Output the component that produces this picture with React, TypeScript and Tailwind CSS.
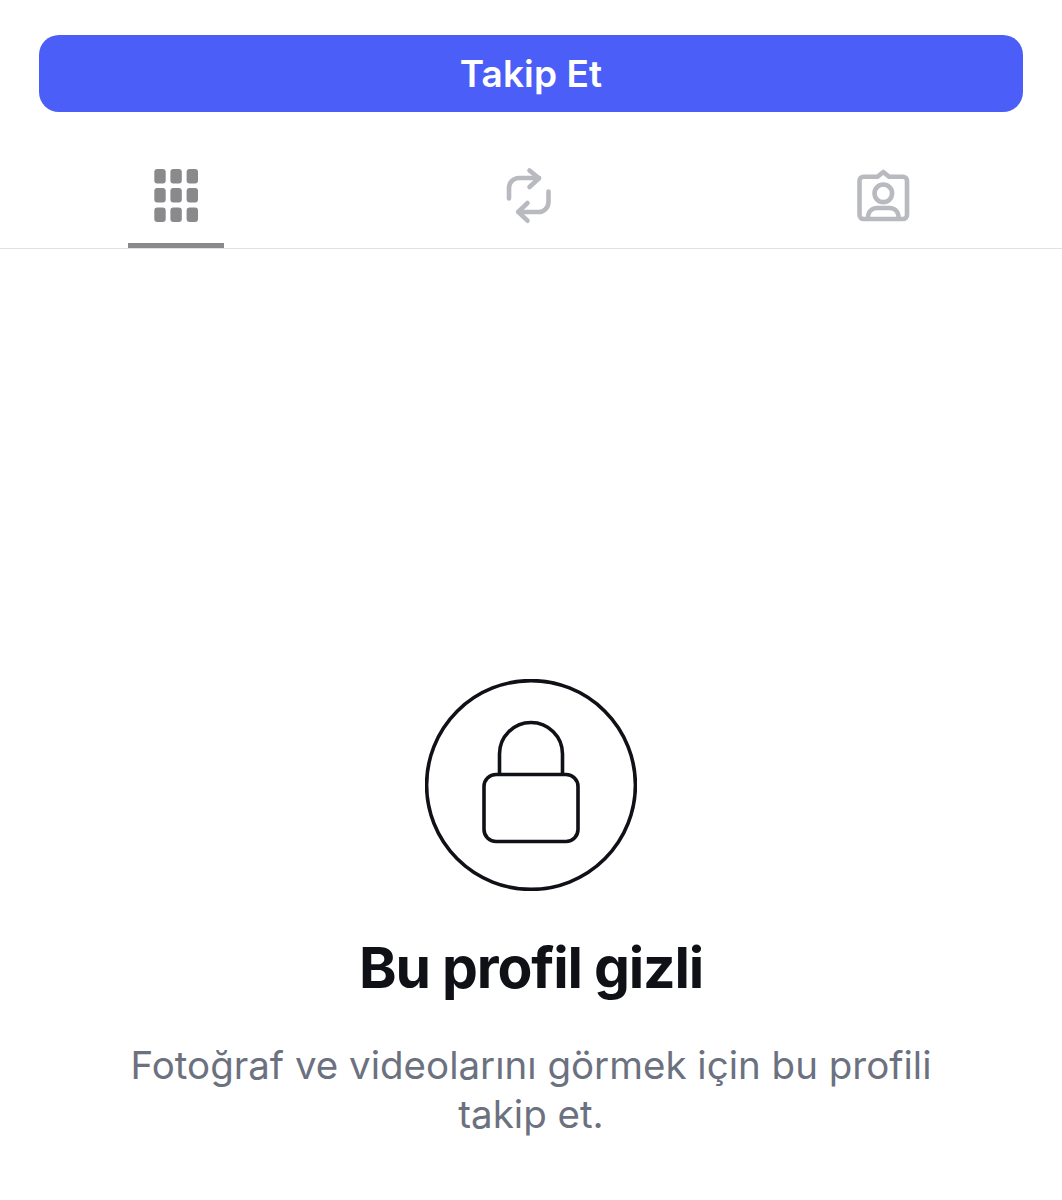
export default function App() {
  return (
    <div className="min-h-[1200px] bg-white pt-[35px] font-['Inter',sans-serif]">
      <div className="px-[39px]">
        <button className="w-full h-[77px] rounded-[20px] bg-[#4b5ff8] text-white text-[37px] font-semibold tracking-[0.1px]">
          Takip Et
        </button>
      </div>

      <div className="relative grid grid-cols-3 h-[137px] border-b border-[#e2e2e4]">
        <div className="flex justify-center pt-[53px]">
          <svg width="60" height="60" viewBox="147 165 60 60" fill="#8a8a8c">
            <rect x="154.3" y="169" width="11.4" height="14.5" rx="3" />
            <rect x="170.4" y="169" width="11.4" height="14.5" rx="3" />
            <rect x="186.6" y="169" width="11.4" height="14.5" rx="3" />
            <rect x="154.3" y="188" width="11.4" height="14.5" rx="3" />
            <rect x="170.4" y="188" width="11.4" height="14.5" rx="3" />
            <rect x="186.6" y="188" width="11.4" height="14.5" rx="3" />
            <rect x="154.3" y="207.5" width="11.4" height="14.5" rx="3" />
            <rect x="170.4" y="207.5" width="11.4" height="14.5" rx="3" />
            <rect x="186.6" y="207.5" width="11.4" height="14.5" rx="3" />
          </svg>
        </div>
        <div className="flex justify-center pt-[53px]">
          <svg width="60" height="60" viewBox="501 165 60 60" fill="none" stroke="#b8babf" strokeWidth="4.6" strokeLinecap="round" strokeLinejoin="round">
            <path d="M509 198.5V188a10 10 0 0 1 10-10h20" />
            <path d="M529.5 170.500l9.500 7.800-9.500 8.700" />
            <path d="M548.5 191.5V202a10 10 0 0 1-10 10h-20" />
            <path d="M527.5 203l-9.3 8.800 9.300 8.900" />
          </svg>
        </div>
        <div className="flex justify-center pt-[53px]">
          <svg width="60" height="60" viewBox="855 165 60 60" fill="none" stroke="#b8babf" strokeWidth="4.6" strokeLinecap="round" strokeLinejoin="round">
            <path d="M863.500 176.700h14l5.800-4.800 5.800 4.800h13.900a4 4 0 0 1 4 4V215a4 4 0 0 1-4 4H863.500a4 4 0 0 1-4-4V180.700a4 4 0 0 1 4-4z" />
            <circle cx="883.300" cy="193.300" r="8.800" />
            <path d="M868 218c0-6 3.500-10 9-10h12.600c5.500 0 9 4 9 10" />
          </svg>
        </div>
        <div className="absolute left-[128px] bottom-0 w-[96px] h-[5px] bg-[#8a8a8c]" />
      </div>

      <div className="flex flex-col items-center mt-[430px]">
        <svg width="212" height="212" viewBox="425 679 212 212" fill="none" stroke="#0f1117">
          <circle cx="531" cy="785" r="104.400" strokeWidth="3.600" />
          <path d="M499.500 773V754a31.500 31.500 0 0 1 63 0V773" strokeWidth="3.600" />
          <rect x="484" y="774.500" width="94" height="67" rx="12" strokeWidth="3.600" />
        </svg>
        <h1 className="mt-[42px] text-[57px] leading-[70px] font-bold tracking-[-1.2px] text-[#0f1117]">Bu profil gizli</h1>
        <p className="mt-[38px] w-[830px] text-center text-[38.5px] leading-[49px] text-[#6c7180]">
          Fotoğraf ve videolarını görmek için bu profili takip et.
        </p>
      </div>
    </div>
  )
}
